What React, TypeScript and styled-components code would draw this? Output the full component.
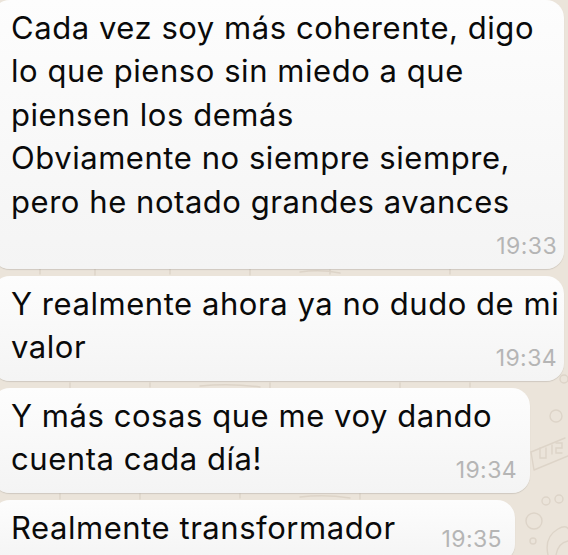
import React from "react";
import styled, { createGlobalStyle } from "styled-components";

const doodles = `<svg xmlns='http://www.w3.org/2000/svg' width='568' height='555' fill='none' stroke='#ddd4c8' stroke-width='1.4' stroke-linecap='round'>
<path d='M40 269 v5 M95 269 v6 M170 269 v5 M250 269 v6 M330 270 v4 M450 269 v5 M300 272 q20 -3 40 1'/>
<path d='M70 383 v5 M150 383 v4 M270 383 v5 M400 383 v5 M470 383 v4 M200 386 q30 -3 60 1'/>
<path d='M60 494 v5 M140 494 v5 M240 494 v4 M360 494 v5 M300 497 q25 -3 50 1'/>
<circle cx='564' cy='379' r='4'/>
<circle cx='556' cy='416' r='6'/>
<path d='M531 452 l34 -14 M534 470 l34 -14 M531 452 l3 18'/>
<path d='M540 448 v10 h6 v-10 M552 445 v9 M556 443 h6 v5 h-6 v5 h6'/>
<circle cx='546' cy='501' r='4'/>
<circle cx='559' cy='499' r='4'/>
<circle cx='534' cy='521' r='8'/>
<circle cx='533' cy='541' r='3'/>
<path d='M548 555 q-4 -18 10 -26 q10 -6 12 4 M556 555 q2 -12 12 -14'/>
</svg>`;

const GlobalStyle = createGlobalStyle`
  html, body {
    margin: 0;
    padding: 0;
  }
  body {
    width: 568px;
    height: 555px;
    overflow: hidden;
    background-color: #ebe4da;
    background-image: url("data:image/svg+xml,${encodeURIComponent(doodles)}");
    background-repeat: no-repeat;
    font-family: Inter, "Noto Sans", "Liberation Sans", sans-serif;
    -webkit-font-smoothing: antialiased;
  }
`;

const Chat = styled.div`
  display: flex;
  flex-direction: column;
  align-items: flex-start;
  gap: 7px;
`;

const Bubble = styled.div<{ $width: number; $pr: number }>`
  display: flow-root;
  box-sizing: border-box;
  width: ${(p) => p.$width}px;
  margin-left: -8px;
  padding: 6px ${(p) => p.$pr}px 11px 19px;
  border-radius: 18px;
  background: linear-gradient(#fdfdfd, #f4f4f4);
  box-shadow: 0 1px 1px rgba(0, 0, 0, 0.12);
`;

const Text = styled.div`
  white-space: pre;
  font-size: 31px;
  line-height: 43.4px;
  letter-spacing: 0.55px;
  color: #0a0a0a;
`;

const Line = styled.span``;

const Time = styled.span<{ $below?: boolean }>`
  float: right;
  margin-left: 24px;
  margin-top: ${(p) => (p.$below ? 11.5 : 22)}px;
  font-size: 23px;
  line-height: 23px;
  letter-spacing: 0.4px;
  color: #b5b5b5;
`;

const messages = [
  {
    lines: [
      "Cada vez soy más coherente, digo",
      "lo que pienso sin miedo a que",
      "piensen los demás",
      "Obviamente no siempre siempre,",
      "pero he notado grandes avances",
    ],
    time: "19:33",
    width: 572,
    pr: 7,
    below: true,
  },
  {
    lines: ["Y realmente ahora ya no dudo de mi", "valor"],
    time: "19:34",
    width: 572,
    pr: 7,
  },
  {
    lines: ["Y más cosas que me voy dando", "cuenta cada día!"],
    time: "19:34",
    width: 538,
    pr: 13,
  },
  {
    lines: ["Realmente transformador"],
    time: "19:35",
    width: 523,
    pr: 13,
  },
];

const App: React.FC = () => {
  return (
    <>
      <GlobalStyle />
      <Chat>
        {messages.map((m, i) => (
          <Bubble key={i} $width={m.width} $pr={m.pr}>
            <Text>
              {m.lines.map((line, j) => (
                <React.Fragment key={j}>
                  {j > 0 && <br />}
                  <Line>{line}</Line>
                </React.Fragment>
              ))}
              <Time $below={m.below}>{m.time}</Time>
            </Text>
          </Bubble>
        ))}
      </Chat>
    </>
  );
};

export default App;
